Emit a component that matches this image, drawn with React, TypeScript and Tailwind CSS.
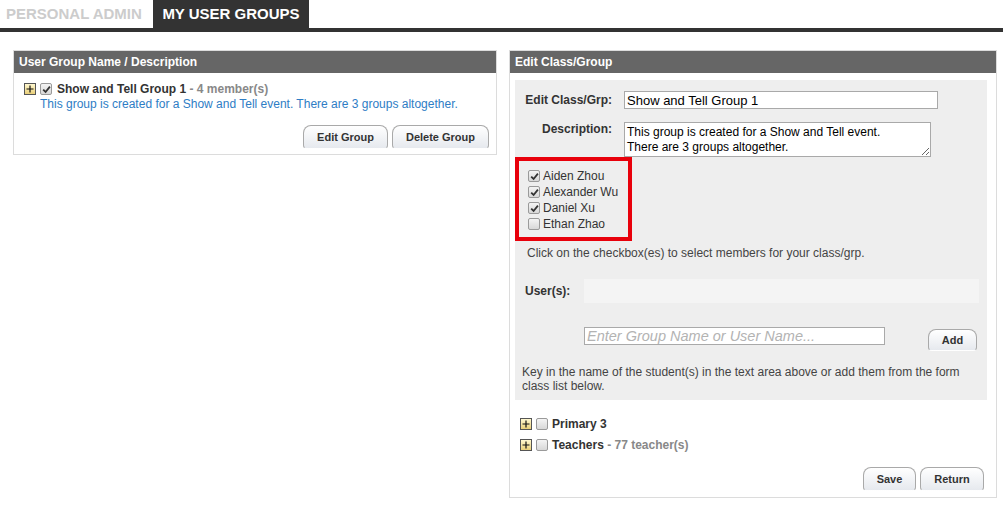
import React from "react";

const Plus = () => (
    <span className="inline-flex h-[12px] w-[12px] flex-none items-center justify-center border border-[#555] bg-gradient-to-b from-[#fff8d0] to-[#e9cf78]">
        <svg width="8" height="8" viewBox="0 0 8 8">
            <path d="M4 0.5V7.5M0.5 4H7.5" stroke="#111" strokeWidth="1.2" />
        </svg>
    </span>
);

const Box = ({ checked }: { checked?: boolean }) => (
    <span className="inline-flex h-[12px] w-[12px] flex-none items-center justify-center rounded-[2px] border border-[#9a9a9a] bg-gradient-to-b from-[#f4f4f4] to-[#d8d8d8]">
        {checked ? (
            <svg width="9" height="9" viewBox="0 0 9 9">
                <path d="M1.2 4.6L3.6 7L7.9 1.6" stroke="#333" strokeWidth="1.8" fill="none" />
            </svg>
        ) : null}
    </span>
);

const Btn = ({ label, className }: { label: string; className?: string }) => (
    <button
        className={
            "rounded-t-[8px] rounded-b-[4px] border border-[#a9a9a9] border-b-transparent bg-gradient-to-b from-white to-[#e6e9ee] text-[11px] font-bold text-[#333] " +
            (className ?? "")
        }
    >
        {label}
    </button>
);

const members = [
    { name: "Aiden Zhou", checked: true },
    { name: "Alexander Wu", checked: true },
    { name: "Daniel Xu", checked: true },
    { name: "Ethan Zhao", checked: false },
];

export default function App() {
    return (
        <div className="h-[510px] w-[1003px] bg-white font-['Liberation_Sans',Arial,sans-serif] text-[12px] leading-[14px] text-[#333]">
            {/* tabs */}
            <div className="flex h-[28px] items-stretch">
                <div className="flex w-[153px] items-center pl-[6px] text-[15px] font-bold text-[#cccccc]">
                    PERSONAL ADMIN
                </div>
                <div className="flex w-[156px] items-center justify-center bg-[#333] text-[15px] font-bold text-white">
                    MY USER GROUPS
                </div>
            </div>
            <div className="h-[4px] bg-[#333]" />

            <div className="flex items-start gap-[12px] pl-[13px] pt-[18px]">
                {/* left panel */}
                <div className="w-[484px] border border-[#dcdcdc]">
                    <div className="flex h-[22px] items-center bg-[#666] pl-[5px] font-bold text-white">
                        User Group Name / Description
                    </div>
                    <div className="px-[10px] pt-[9px]">
                        <div className="flex items-center gap-[4px]">
                            <Plus />
                            <Box checked />
                            <span className="ml-[1px] font-bold text-[#333]">
                                Show and Tell Group 1{" "}
                                <span className="text-[#888]">- 4 member(s)</span>
                            </span>
                        </div>
                        <div className="mt-[1px] pl-[16px] text-[#2e7dc5]">
                            This group is created for a Show and Tell event. There are 3 groups altogether.
                        </div>
                        <div className="flex justify-end gap-[4px] pb-[5px] pt-[14px]">
                            <Btn label="Edit Group" className="h-[24px] w-[85px]" />
                            <Btn label="Delete Group" className="mr-[-3px] h-[24px] w-[97px]" />
                        </div>
                    </div>
                </div>

                {/* right panel */}
                <div className="h-[448px] w-[488px] border border-[#dcdcdc]">
                    <div className="flex h-[22px] items-center bg-[#666] pl-[5px] font-bold text-white">
                        Edit Class/Group
                    </div>
                    <div className="px-[5px] pt-[7px]">
                        <div className="mr-[4px] bg-[#eeeeee] pb-[7px] pt-[11px]">
                            <div className="flex items-center">
                                <label className="w-[97px] text-right font-bold">Edit Class/Grp:</label>
                                <input
                                    readOnly
                                    value="Show and Tell Group 1"
                                    className="ml-[12px] h-[18px] w-[314px] border border-[#a9a9a9] bg-white px-[2px] text-[13px] text-black outline-none"
                                />
                            </div>
                            <div className="mt-[13px] flex items-start">
                                <label className="w-[97px] text-right font-bold">Description:</label>
                                <textarea
                                    readOnly
                                    value={"This group is created for a Show and Tell event.\nThere are 3 groups altogether."}
                                    className="ml-[12px] h-[35px] w-[307px] resize border border-[#a9a9a9] bg-white px-[2px] pt-[2px] pb-0 text-[12px] leading-[15px] text-black outline-none"
                                />
                            </div>
                            <div className="w-[117px] border-[4px] border-[#e8000b] pb-[5px] pl-[9px] pt-[7px]">
                                {members.map((m) => (
                                    <div key={m.name} className="flex h-[16px] items-center gap-[3px]">
                                        <Box checked={m.checked} />
                                        <span>{m.name}</span>
                                    </div>
                                ))}
                            </div>
                            <div className="mt-[5px] pl-[12px] text-[#444]">
                                Click on the checkbox(es) to select members for your class/grp.
                            </div>
                            <div className="mt-[19px] flex items-center">
                                <span className="w-[69px] pl-[10px] font-bold">User(s):</span>
                                <div className="h-[24px] w-[395px] bg-[#f4f4f4]" />
                            </div>
                            <div className="mt-[24px] flex items-start">
                                <input
                                    readOnly
                                    placeholder="Enter Group Name or User Name..."
                                    className="ml-[69px] h-[18px] w-[301px] border border-[#a9a9a9] bg-white px-[2px] text-[14.5px] italic text-black outline-none placeholder:text-[#b3b3b3]"
                                />
                                <Btn label="Add" className="ml-[43px] mt-[2px] h-[22px] w-[49px]" />
                            </div>
                            <div className="mt-[14px] pl-[7px] text-[#444]">
                                Key in the name of the student(s) in the text area above or add them from the form
                                <br />
                                class list below.
                            </div>
                        </div>

                        <div className="mt-[17px] flex flex-col gap-[7px] pl-[5px]">
                            <div className="flex items-center gap-[4px]">
                                <Plus />
                                <Box />
                                <span className="font-bold">Primary 3</span>
                            </div>
                            <div className="flex items-center gap-[4px]">
                                <Plus />
                                <Box />
                                <span className="font-bold">
                                    Teachers <span className="text-[#888]">- 77 teacher(s)</span>
                                </span>
                            </div>
                        </div>

                        <div className="mt-[15px] flex justify-end gap-[4px] pr-[7px]">
                            <Btn label="Save" className="h-[24px] w-[53px]" />
                            <Btn label="Return" className="h-[24px] w-[64px]" />
                        </div>
                    </div>
                </div>
            </div>
        </div>
    );
}
